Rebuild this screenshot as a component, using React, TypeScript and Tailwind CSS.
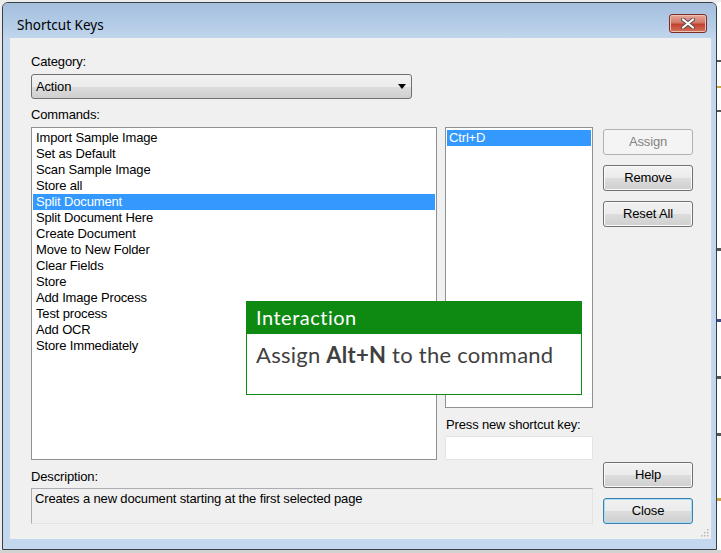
import { FC, ReactNode } from "react";

const commands = [
  "Import Sample Image",
  "Set as Default",
  "Scan Sample Image",
  "Store all",
  "Split Document",
  "Split Document Here",
  "Create Document",
  "Move to New Folder",
  "Clear Fields",
  "Store",
  "Add Image Process",
  "Test process",
  "Add OCR",
  "Store Immediately",
];

const ui = "font-['Liberation_Sans',Arial,sans-serif] text-[13px] leading-[16px] tracking-[-0.15px] text-black";

// win7 style push button
const WinButton: FC<{ children: ReactNode; disabled?: boolean; focused?: boolean; className?: string }> = ({
  children,
  disabled,
  focused,
  className = "",
}) => {
  if (disabled) {
    return (
      <div
        className={`flex items-center justify-center w-[90px] h-[26px] rounded-[3px] border border-[#adb2b5] bg-[#f4f4f4] text-[#838383] ${className}`}
      >
        {children}
      </div>
    );
  }
  return (
    <div
      className={`flex items-center justify-center w-[90px] h-[26px] rounded-[3px] border bg-[linear-gradient(to_bottom,#f2f2f2_0%,#ebebeb_50%,#dddddd_50%,#cfcfcf_100%)] ${
        focused ? "border-[#3c7fb1] shadow-[inset_0_0_0_1px_#a9dcf7]" : "border-[#707070] shadow-[inset_0_0_0_1px_#fbfbfb]"
      } ${className}`}
    >
      {children}
    </div>
  );
};

const Ticks: FC = () => (
  <div className="flex flex-col w-[4px] h-full bg-white">
    <div className="h-[58px]" />
    <div className="h-[2px] w-[4px] bg-[#555]" />
    <div className="h-[24px]" />
    <div className="h-[2px] w-[4px] bg-[#c9a640]" />
    <div className="h-[22px]" />
    <div className="h-[2px] w-[4px] bg-[#555]" />
    <div className="h-[136px]" />
    <div className="h-[3px] w-[4px] bg-[#555]" />
    <div className="h-[68px]" />
    <div className="h-[3px] w-[4px] bg-[#3a4a8a]" />
    <div className="h-[54px]" />
    <div className="h-[3px] w-[4px] bg-[#555]" />
    <div className="h-[54px]" />
    <div className="h-[3px] w-[4px] bg-[#555]" />
    <div className="h-[62px]" />
    <div className="h-[3px] w-[4px] bg-[#c9a640]" />
  </div>
);

export default function App() {
  return (
    <div className="relative w-[721px] h-[553px] overflow-hidden bg-[#ececec] flex flex-col">
      <div className="h-[2px] bg-[#ececec]" />
      <div className="flex h-[548px]">
        <div className="w-[2px] bg-[#ececec]" />

        {/* dialog window */}
        <div className="flex flex-col w-[715px] h-[548px] border border-[#3a3f45] rounded-t-[6px] bg-[#c3d8ee]">
          {/* title bar */}
          <div className="flex items-start justify-between h-[35px] rounded-t-[5px] bg-[linear-gradient(to_bottom,#a4bfdd_0%,#b3cbe6_60%,#c0d6ec_100%)] pl-[14px] pr-[9px]">
            <div className="pt-[12px] font-['Noto_Sans',sans-serif] text-[13.5px] leading-[20px] text-black">
              Shortcut Keys
            </div>
            <div className="mt-[11px] flex items-center justify-center w-[38px] h-[19px] rounded-[3px] border border-[#7a2e2a] bg-[linear-gradient(to_bottom,#e4a99c_0%,#d37866_45%,#c2402e_55%,#d5735c_100%)] shadow-[inset_0_0_0_1px_#f0c0b4]">
              <svg width="14" height="11" viewBox="0 0 14 11">
                <path d="M2 1.5 L12 9.5 M12 1.5 L2 9.5" stroke="#5a4a4a" strokeWidth="4" strokeLinecap="round" />
                <path d="M2 1.5 L12 9.5 M12 1.5 L2 9.5" stroke="#ffffff" strokeWidth="2.2" strokeLinecap="round" />
              </svg>
            </div>
          </div>

          {/* client area */}
          <div className={`relative flex ml-[7px] mr-[5px] h-[501px] bg-[#f0f0f0] pl-[21px] ${ui}`}>
            <div className="flex flex-col w-[562px]">
              <div className="mt-[16px] h-[16px]">Category:</div>
              <div className="mt-[4px] flex items-center justify-between w-[381px] h-[25px] rounded-[3px] border border-[#707070] bg-[linear-gradient(to_bottom,#f2f2f2_0%,#ebebeb_50%,#dddddd_50%,#cfcfcf_100%)] pl-[4px] pr-[5px]">
                <span>Action</span>
                <svg width="8" height="5" viewBox="0 0 8 5">
                  <path d="M0 0 H8 L4 5 Z" fill="#000" />
                </svg>
              </div>
              <div className="mt-[8px] h-[16px]">Commands:</div>

              <div className="mt-[4px] flex gap-[8px]">
                <div className="w-[406px] h-[333px] border border-[#8e9196] bg-white px-[1px] pt-[2px]">
                  {commands.map((c) => (
                    <div
                      key={c}
                      className={`h-[16px] pl-[3px] whitespace-nowrap ${c === "Split Document" ? "bg-[#3399ff] text-white" : ""}`}
                    >
                      {c}
                    </div>
                  ))}
                </div>

                <div className="flex flex-col w-[148px]">
                  <div className="h-[281px] border border-[#8e9196] bg-white px-[1px] pt-[2px]">
                    <div className="h-[16px] pl-[2px] bg-[#3399ff] text-white">Ctrl+D</div>
                  </div>
                  <div className="mt-[9px] h-[16px] pl-[1px]">Press new shortcut key:</div>
                  <div className="mt-[3px] h-[24px] rounded-[2px] border border-[#e2e3ea] bg-white" />
                </div>
              </div>

              <div className="mt-[9px] h-[16px]">Description:</div>
              <div className="mt-[3px] h-[36px] border border-[#abadb3] border-r-[#e3e3e3] border-b-[#e3e3e3] bg-[#f0f0f0] pl-[3px] pt-[2px]">
                Creates a new document starting at the first selected page
              </div>
            </div>

            {/* buttons */}
            <div className="flex flex-col ml-[10px] pt-[91px]">
              <WinButton disabled>Assign</WinButton>
              <WinButton className="mt-[10px]">Remove</WinButton>
              <WinButton className="mt-[10px]">Reset All</WinButton>
              <WinButton className="mt-[235px]">Help</WinButton>
              <WinButton focused className="mt-[10px] h-[25px]">
                Close
              </WinButton>
            </div>

            {/* size grip */}
            <svg className="absolute right-[2px] bottom-[2px]" width="10" height="10" viewBox="0 0 10 10">
              {[
                [8, 2],
                [8, 5],
                [5, 5],
                [8, 8],
                [5, 8],
                [2, 8],
              ].map(([x, y]) => (
                <rect key={`${x}-${y}`} x={x} y={y} width="1.5" height="1.5" fill="#b8b8b8" />
              ))}
            </svg>
          </div>
        </div>

        <Ticks />
      </div>
      <div className="h-[3px] bg-[#d2d2d2]" />

      {/* interaction callout */}
      <div className="absolute left-[246px] top-[301px] w-[336px] h-[94px] flex flex-col font-['Lato',sans-serif]">
        <div className="h-[33px] bg-[#0e8a13] pl-[10px] pt-[4px] text-white text-[20px] leading-[24px] tracking-[0.5px]">
          Interaction
        </div>
        <div className="flex-1 border border-t-0 border-[#0e8a13] bg-white pl-[9px] pt-[7px] text-[#404040] text-[22px] leading-[27px] tracking-[0.25px]">
          Assign <span className="font-bold">Alt+N</span> to the command
        </div>
      </div>
    </div>
  );
}
